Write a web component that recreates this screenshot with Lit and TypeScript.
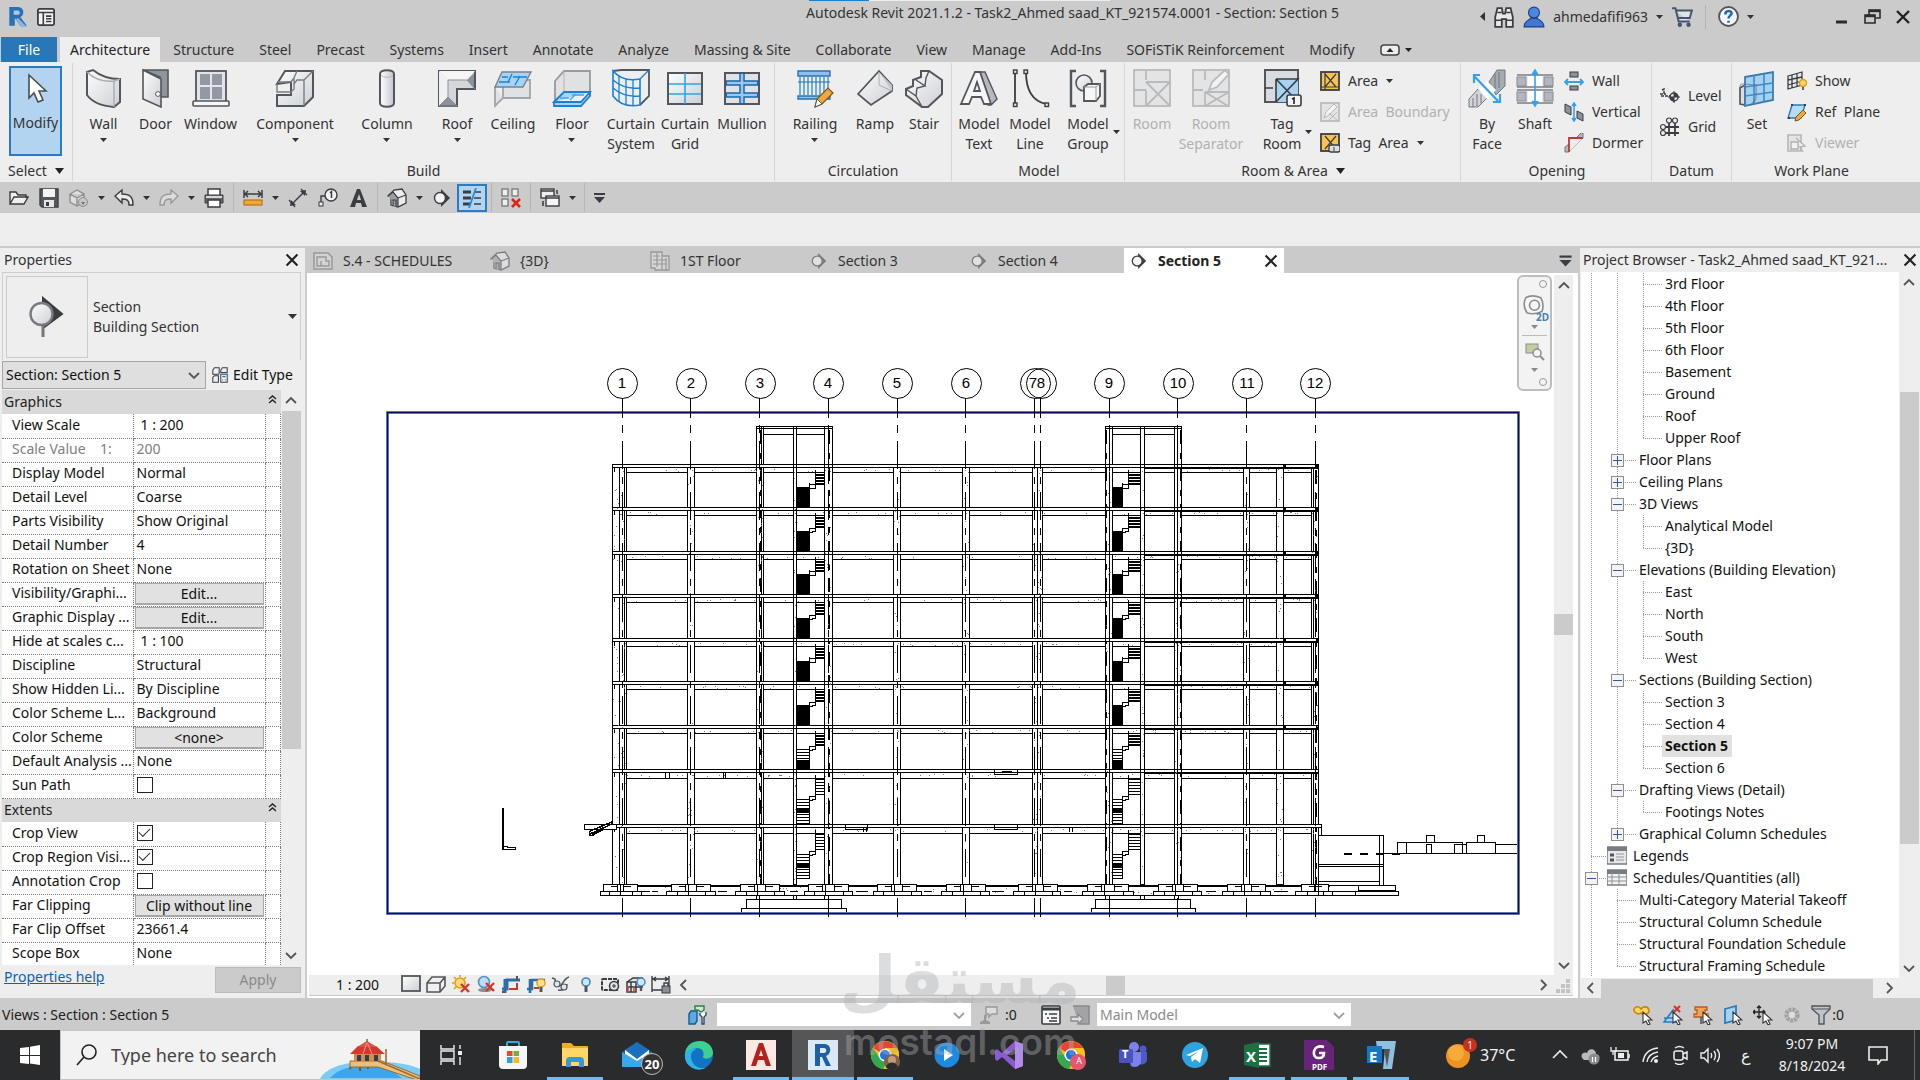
import { LitElement, html, svg, css, nothing } from "lit";
import { customElement } from "lit/decorators.js";
import { classMap } from "lit/directives/class-map.js";

const K = "#53565c";
const D = "#3a3d42";
const B = "#1c7fd6";

/* 40-unit ribbon icons */
const big: Record<string, unknown> = {
  modify: svg`<path d="M13 7v23l5-5 4 9 5-2-4-9h7z" fill="#fff" stroke="#4a4d52" stroke-width="1.6"/>`,
  wall: svg`<path d="M3 4l6-2c6 5 15 9 27 9v23l-6 5C18 38 8 34 3 27z" fill="url(#lite)" stroke="${K}" stroke-width="2"/><path d="M3 4c8 8 17 10 27 9v26M30 13l6-2" fill="none" stroke="#a9adb2" stroke-width="1.4"/>`,
  door: svg`<path d="M7 2h25v27h-8V9z" fill="#8f959d" stroke="${K}" stroke-width="1.6"/><path d="M7 2l18 9v28L7 31z" fill="url(#lite)" stroke="${K}" stroke-width="1.6"/><circle cx="22" cy="26" r="2.4" fill="#fff" stroke="${K}"/>`,
  window: svg`<rect x="5" y="3" width="30" height="31" fill="#e2e4e7" stroke="${K}" stroke-width="1.8"/><rect x="9" y="6" width="22" height="25" fill="#9299a3"/><path d="M20 6v25M9 18h22" stroke="#e4e6ea" stroke-width="2"/><rect x="2" y="33" width="36" height="5" rx="1" fill="#f6f6f6" stroke="${K}" stroke-width="1.6"/>`,
  component: svg`<path d="M2 16L10 3h28v26l-9 9H2V27h14V14z" fill="url(#lite)" stroke="${K}" stroke-width="2"/><path d="M2 16v8h14l3-3V10L22 3M19 10l-3 4H3M29 12v26M29 12l9-9M29 12h-7l-3 4" fill="none" stroke="#7a7d83" stroke-width="1.4"/>`,
  column: svg`<path d="M13 6c0-5 14-5 14 0v29c0 5-14 5-14 0z" fill="url(#side)" stroke="${K}" stroke-width="2"/><path d="M14 7c2 3 10 3 12 0" fill="none" stroke="#b4b7bb"/>`,
  roof: svg`<path d="M2 3h36v18H20v17H2z" fill="#d3d6da" stroke="${K}" stroke-width="2"/><path d="M2 3l9 9h19l8-9z" fill="#f6f6f7"/><path d="M2 3l9 9v17l-9 9z" fill="#f0f1f2"/><path d="M11 12v17l-9 9h18l-9-9M11 12h19l8 9" fill="none" stroke="#8d9198"/><path d="M3 37l8-8 8 8zM37 5v15l-7-8z" fill="#8c929b"/>`,
  ceiling: svg`<path d="M2 19v19l8-8V12h27v18H10" fill="#dfe1e3" stroke="#a2a5a9" stroke-width="1.8"/><path d="M2 19L9 4h29l-8 15z" fill="#a6d4f6" stroke="#78828c" stroke-width="1.4"/><path d="M6 14h11M20 9h14M9 9h6M15 14l4-8M22 17l5-9" stroke="${B}" stroke-width="1.4"/>`,
  floor: svg`<path d="M3 32V13L12 3h26v21" fill="#dfe1e3" stroke="#96999e" stroke-width="1.8"/><path d="M12 3v22" stroke="#b4b7bb"/><path d="M2 34l10-10h26l-9 10zv4h27l9-10v-4" fill="#a6d4f6" stroke="${B}" stroke-width="1.8"/><path d="M8 30h9M20 27h12M18 32l6-6" stroke="#4da2ea" stroke-width="1.4"/>`,
  curtainSystem: svg`<path d="M2 3l8-1h28v26l-9 9" fill="#eceef0" stroke="${K}" stroke-width="1.8"/><path d="M2 3c7 8 17 10 27 8v26C18 39 8 36 2 28z" fill="#e9f1f8" stroke="${B}" stroke-width="1.6"/><path d="M2 12c8 7 17 9 27 8M2 20c8 7 17 9 27 8M8 8v25M15 11v25M22 12v25M29 11l9-9" fill="none" stroke="${B}" stroke-width="1.3"/>`,
  curtainGrid: svg`<rect x="3" y="5" width="34" height="31" fill="url(#lite)" stroke="${K}" stroke-width="2"/><path d="M20 5v31M4 16h32M4 26h32" stroke="#31a2ec" stroke-width="1.6"/>`,
  mullion: svg`<rect x="3" y="5" width="34" height="31" fill="#dfe2e6" stroke="${K}" stroke-width="2"/><path d="M4 15h32M4 27h32M20 5v31" stroke="#1a66ab" stroke-width="5.5"/><path d="M5 15h30M5 27h30M20 6v29" stroke="#9cc6ec" stroke-width="2.6"/>`,
  railing: svg`<path d="M3 3h32v5H3zM3 28h32v3H3z" fill="#8fc1ec" stroke="#2a70ad" stroke-width="1.4"/><path d="M5 8v20M9 8v20M13 8v20M17 8v20M21 8v20M25 8v20M29 8v20M33 8v20" stroke="#4e9bd8" stroke-width="1.6"/><path d="M3 14h32" stroke="#2a70ad" /><path d="M20 39l2-8 11-11 5 5-11 11z" fill="#f2a93b" stroke="#7a5419" stroke-width="1.2"/><path d="M20 39l2-8 5 5z" fill="#fff" stroke="#555"/>`,
  ramp: svg`<path d="M3 26L24 3l13 14v6L16 37z" fill="url(#lite)" stroke="${K}" stroke-width="1.8"/><path d="M37 23L24 17V4" fill="none" stroke="#a9adb2"/><path d="M24 4l13 13v6z" fill="#c2c5ca"/>`,
  stair: svg`<path d="M2 21l7-3V12l8-3V3h8l13 9v14L24 39h-6L2 27z" fill="url(#lite)" stroke="${K}" stroke-width="2"/><path d="M2 21l10 7 1-8 8-2-9-6M21 18l1-8 3-7M12 28l6 11" fill="none" stroke="${K}" stroke-width="1.4"/>`,
  modelText: svg`<path d="M19 4h7l12 27-6 6h-3z" fill="#b5b9bf" stroke="${K}" stroke-width="1.4"/><path d="M2 36L16 4h5l11 32h-7l-3-7H13l-3 7zM15 23h6l-3-9z" fill="#f5f6f7" stroke="${K}" stroke-width="1.8" fill-rule="evenodd"/>`,
  modelLine: svg`<path d="M5 4v32M16 4c0 18 6 29 20 32" fill="none" stroke="${D}" stroke-width="1.8"/><g fill="#eee" stroke="${D}" stroke-width="1.4"><rect x="3.500" y="2" width="3.500" height="3.500"/><rect x="3.500" y="35" width="3.500" height="3.500"/><rect x="14" y="2" width="3.500" height="3.500"/><rect x="35" y="35" width="3.500" height="3.500"/></g>`,
  modelGroup: svg`<path d="M8 3H3v35h5M32 3h5v35h-5" fill="none" stroke="${K}" stroke-width="2.4"/><circle cx="16" cy="15" r="8" fill="url(#lite)" stroke="${K}" stroke-width="1.6"/><path d="M16 19l4-3h12v12l-4 5H16z" fill="#f5f6f7" stroke="${K}" stroke-width="1.8"/><path d="M16 19h12v14M28 19l4-3" fill="none" stroke="#9a9da2"/>`,
  room: svg`<g stroke="#b9babc" fill="#e3e4e5" stroke-width="1.8"><rect x="2" y="2" width="36" height="36"/><path d="M2 22h12M14 2v10M14 22v16M14 14h24M14 14l23 23M38 14L14 38" fill="none"/></g>`,
  roomSeparator: svg`<g stroke="#b9babc" fill="#e3e4e5" stroke-width="1.8"><rect x="2" y="2" width="36" height="36"/><path d="M2 22h10M14 2v10M14 24v14M14 24h24M14 24l23 14M38 24L14 38" fill="none"/><path d="M18 22l3-8L34 2l4 4-12 13z" fill="#f3f3f3"/></g>`,
  tagRoom: svg`<rect x="3" y="2" width="33" height="32" fill="#d8dbdf" stroke="${K}" stroke-width="2"/><rect x="14" y="11" width="22" height="23" fill="#a8d1f2"/><path d="M14 11h22L14 34M14 11l22 23M14 11v23M3 20h8" fill="none" stroke="${D}" stroke-width="1.6"/><rect x="25" y="27" width="14" height="11" rx="2" fill="#f4f4f4" stroke="${D}" stroke-width="1.6"/><path d="M30 31l2-1v6" stroke="#222" fill="none" stroke-width="1.6"/>`,
  byFace: svg`<path d="M22 14L30 2h8v16l-9 9z" fill="#a5abb3" stroke="#73777d"/><path d="M2 31l9-10 9 9-9 9H2z" fill="#d2d5d9" stroke="#73777d"/><path d="M28 6v16M32 4v16M6 30v9M10 26v12M14 26v9" stroke="#73777d"/><path d="M11 21l9-8 9 9-9 9z" fill="#fff"/><path d="M7 8l24 25M7 15V7h6M33 26v8h-7" fill="none" stroke="#31a2ec" stroke-width="2.2"/>`,
  shaft: svg`<g fill="#b3b7bd" stroke="#85898f"><rect x="2" y="9" width="9" height="9"/><rect x="29" y="9" width="9" height="9"/><rect x="2" y="24" width="9" height="9"/><rect x="29" y="24" width="9" height="9"/></g><path d="M2 7h36M2 19h36M2 35h36M2 22h36" stroke="#7b7f85" stroke-width="1.6"/><rect x="13" y="8" width="14" height="10" fill="#fff"/><rect x="13" y="23" width="14" height="11" fill="#fff"/><path d="M20 3v34M17 7l3-5 3 5M17 33l3 5 3-5" fill="#31a2ec" stroke="#31a2ec" stroke-width="1.6"/>`,
  set: svg`<path d="M3 20l5-3v20l-5-1z" fill="#ddd" stroke="${K}" stroke-width="1.6"/><path d="M8 9l28-5v28L8 38z" fill="#a5d1ee" stroke="#3d7ab0" stroke-width="1.8"/><path d="M17 7v29M27 6v28M8 19l28-4M8 28l28-4" stroke="#3d8bcb" stroke-width="1.6"/><path d="M3 34V18q1-3 4-2l12 1v14l-5 6" fill="none" stroke="#567" stroke-width="1.2" opacity=".6"/>`,
};

/* 20-unit icons */
const sm: Record<string, unknown> = {
  appR: svg`<path d="M3 18V1h8c6 0 6 8 2 9l6 8h-6l-5-7v7z" fill="#2b70b3"/><path d="M7 4h4c2 0 2 4 0 4H7z" fill="#a9cbe9"/><path d="M11 11l8 8h-5l-5-7z" fill="#8eb4dd"/>`,
  panel: svg`<rect x="1" y="1" width="18" height="18" rx="2" fill="#f3f3f3" stroke="${D}" stroke-width="2"/><path d="M1 5h18M7 5v14M10 9h6M10 12h6M10 15h6" stroke="${D}" stroke-width="1.8"/>`,
  binoc: svg`<path d="M2 19v-9l2-8h4l1 5h2l1-5h4l2 8v9h-6v-7H8v7z" fill="#e8e8e8" stroke="${D}" stroke-width="1.6"/><path d="M2 13h6M12 13h6M4 6h4M12 6h4" stroke="${D}" stroke-width="1.4"/>`,
  user: svg`<circle cx="10" cy="6" r="5" fill="#4b86e0" stroke="#1d407f"/><path d="M1 19c0-6 5-6 6-8h6c1 2 6 2 6 8z" fill="#3f77d3" stroke="#1d407f"/>`,
  cart: svg`<path d="M1 2h3l3 12h10M5 4h14l-2 7H7" fill="#dfe5ec" stroke="#44566e" stroke-width="1.8"/><circle cx="8" cy="17" r="2" fill="#44566e"/><circle cx="16" cy="17" r="2" fill="#44566e"/>`,
  help: svg`<circle cx="10" cy="10" r="9" fill="#f4f7fb" stroke="${K}" stroke-width="1.8"/><path d="M7 8c0-4 6-4 6-1 0 2-3 2-3 5M10 14v2" fill="none" stroke="#2467b5" stroke-width="2.4"/>`,
  min: svg`<path d="M5 15h11" stroke="#2b2b2b" stroke-width="3"/>`,
  restore: svg`<path d="M7 3h11v8H7z" fill="none" stroke="#2b2b2b" stroke-width="1.6"/><path d="M7 4h11" stroke="#2b2b2b" stroke-width="2.4"/><path d="M3 8h10v8H3z" fill="#cbcbcb" stroke="#2b2b2b" stroke-width="1.6"/><path d="M3 9h10" stroke="#2b2b2b" stroke-width="2.4"/>`,
  close: svg`<path d="M4 4l12 12M16 4L4 16" stroke="#222" stroke-width="2.4"/>`,
  folder: svg`<path d="M1 16V4h6l2 3h8v3M1 16l4-7h14l-4 7z" fill="#efefef" stroke="${D}" stroke-width="1.4"/>`,
  save: svg`<path d="M1 1h18v18H3l-2-2z" fill="#54575d" stroke="${D}" stroke-width="1.4"/><path d="M4 1h12v8H4z" fill="#f3f3f3"/><path d="M5 12h10v7H5z" fill="#e5e5e5"/><path d="M7 14h3v4H7z" fill="${D}"/>`,
  sync: svg`<path d="M1 6l7-4 7 4v8l-7 4-7-4zM1 6l7 4 7-4M8 10v8" fill="#dedede" stroke="#8b8d90" stroke-width="1.4"/><circle cx="14" cy="14" r="4.500" fill="#c4c5c7" stroke="#8b8d90"/><path d="M12 14h4l-2 3z" fill="#777"/>`,
  undo: svg`<path d="M1 8l7-6v4c8 0 11 3 11 11h-4c0-5-2-6-7-6v4z" fill="#eaeaea" stroke="${D}" stroke-width="1.4"/>`,
  redo: svg`<path d="M19 8l-7-6v4C4 6 1 9 1 17h4c0-5 2-6 7-6v4z" fill="#dcdcdc" stroke="#97999c" stroke-width="1.4"/>`,
  print: svg`<rect x="4" y="1" width="12" height="7" fill="#fff" stroke="${D}" stroke-width="1.5"/><path d="M1 7h18v8H1z" fill="#64676c" stroke="${D}"/><rect x="4" y="12" width="12" height="7" fill="#fff" stroke="${D}" stroke-width="1.5"/><path d="M2 9h16" stroke="#d7d7d7" stroke-width="2"/>`,
  measure: svg`<path d="M1 6h18M1 2v8M19 2v8M5 3L2 6l3 3M15 3l3 3-3 3" fill="none" stroke="${D}" stroke-width="1.5"/><rect x="1" y="12" width="18" height="5" fill="#f3a734" stroke="#a8690c"/>`,
  dim: svg`<path d="M4 16L16 4" stroke="${D}" stroke-width="1.5"/><path d="M2 18l1-6 5 5zM18 2l-1 6-5-5z" fill="${D}"/><path d="M1 12l6 7M13 1l6 6" stroke="${D}" stroke-width="1.2"/>`,
  tag: svg`<circle cx="13" cy="7" r="6" fill="#f2f2f2" stroke="${D}" stroke-width="1.4"/><path d="M12 5l1.500-1.500V10" fill="none" stroke="${D}" stroke-width="1.5"/><path d="M7 8H3v9" fill="none" stroke="${D}" stroke-width="1.4"/><rect x="1" y="14" width="4" height="4" fill="#eee" stroke="${D}"/>`,
  textA: svg`<path d="M2 19L9 1h3l7 18h-5l-1-4H8l-1 4zM9 12h4l-2-6z" fill="${D}" fill-rule="evenodd"/>`,
  house: svg`<path d="M1 8l6-6 8-1 4 6v8l-8 4-7-2V9z" fill="#ececec" stroke="${D}" stroke-width="1.3"/><path d="M1 8l5-4 5 6v9M11 10l8-3M6 18v-6h3v7" fill="#9b9ea3" stroke="${D}" stroke-width="1.2"/>`,
  section: svg`<path d="M9 1l9 9-9 9z" fill="${D}"/><circle cx="8" cy="10" r="5.500" fill="#f1f3f5" stroke="${D}" stroke-width="1.4"/>`,
  thin: svg`<path d="M1 4h8M1 10h8M1 16h8" stroke="${D}" stroke-width="3"/><path d="M12 4h7M12 10h7M12 16h7" stroke="${D}" stroke-width="1.5"/><path d="M14 0L7 20" stroke="#1e8ee6" stroke-width="1.8"/>`,
  closeHidden: svg`<g fill="#eee" stroke="#777" stroke-width="1.3"><rect x="1" y="1" width="6" height="7"/><rect x="11" y="1" width="6" height="7"/><rect x="1" y="11" width="6" height="7"/></g><path d="M11 11l8 8M19 11l-8 8" stroke="#d9261c" stroke-width="2.6"/>`,
  switchWin: svg`<rect x="1" y="1" width="13" height="9" fill="#eee" stroke="${D}" stroke-width="1.4"/><rect x="6" y="8" width="13" height="10" fill="#f5f5f5" stroke="${D}" stroke-width="1.4"/><path d="M1 3h13M6 10h13" stroke="${D}" stroke-width="1.6"/><path d="M17 2v4M3 13v5" stroke="${D}" stroke-width="1.6"/>`,
  custom: svg`<path d="M5 6h11" stroke="${D}" stroke-width="2"/><path d="M5 9h11l-5.500 6z" fill="${D}"/>`,
  area: svg`<rect x="1" y="1" width="18" height="18" fill="#f6c251" stroke="${D}" stroke-width="1.8"/><path d="M5 3l11 13M16 3L5 16M5 1v18M1 16h18" fill="none" stroke="${D}" stroke-width="1.2"/>`,
  areaOff: svg`<rect x="1" y="1" width="18" height="18" fill="#e4e4e4" stroke="#b5b6b8" stroke-width="1.6"/><path d="M4 16l2-6 8-8 3 3-8 8z" fill="#f5f5f5" stroke="#b5b6b8"/><path d="M9 18l8-8M9 11l9 8" stroke="#b5b6b8"/>`,
  areaTag: svg`<rect x="1" y="1" width="18" height="17" fill="#f6c251" stroke="${D}" stroke-width="1.8"/><path d="M5 3l11 13M16 3L5 16" stroke="${D}" stroke-width="1.2"/><rect x="9" y="12" width="11" height="7" rx="2" fill="#dde0e3" stroke="${D}" stroke-width="1.3"/><path d="M14 14v4" stroke="${D}"/>`,
  opWall: svg`<g fill="#8d9299" stroke="${D}"><rect x="6" y="1" width="8" height="5"/><rect x="6" y="15" width="8" height="4"/></g><path d="M1 11h18M4 8l-3 3 3 3M16 8l3 3-3 3" fill="none" stroke="#31a2ec" stroke-width="1.8"/>`,
  opVert: svg`<g fill="#8d9299" stroke="${D}"><path d="M1 2l6 3v8l-6-3zM13 9l6 3v7l-6-3z"/></g><path d="M10 1v18M8 4l2-3 2 3M8 16l2 3 2-3" fill="none" stroke="#31a2ec" stroke-width="1.6"/>`,
  opDorm: svg`<path d="M1 14l4-3v8H1zM13 4l4-4h2v5z" fill="#b3b7bd" stroke="#777"/><path d="M5 19V5h14" fill="none" stroke="#c8372d" stroke-width="1.8"/><path d="M6 18L18 6" stroke="#bbb"/>`,
  level: svg`<path d="M1 10h10M2 4l2-1v5M0 8h6" stroke="${D}" stroke-dasharray="3 1" fill="none" stroke-width="1.5"/><circle cx="14" cy="11" r="4" fill="#eee" stroke="${D}" stroke-width="1.5"/><path d="M14 5v12M8 11h12" stroke="${D}"/><path d="M14 11V7a4 4 0 014 4zM14 11v4a4 4 0 01-4-4z" fill="${D}"/>`,
  grid: svg`<path d="M9 6v13M15 6v13M5 10h14M5 16h14" stroke="${D}" stroke-width="1.8"/><g fill="#eee" stroke="${D}" stroke-width="1.2"><circle cx="9" cy="3.500" r="2.500"/><circle cx="15" cy="3.500" r="2.500"/><circle cx="3" cy="10" r="2.500"/><circle cx="3" cy="16" r="2.500"/></g>`,
  show: svg`<path d="M1 5l14-4v13L1 18zM5 4v13M10 3v13M1 9l14-3M1 14l14-4" fill="#e8eaec" stroke="${D}" stroke-width="1.3"/><circle cx="16" cy="12" r="3.500" fill="#ffd566" stroke="#e59b1a" stroke-width="1.4"/><path d="M15 16h2v3h-2z" fill="#666"/>`,
  refPlane: svg`<path d="M5 3h13l-4 13H1z" fill="#b5dbf5" stroke="#2a7cbd" stroke-width="1.4"/><path d="M4 2h2v2H4zM17 2h2v2h-2zM1 15h2v2H1z" fill="${D}"/><path d="M8 19l1-4 7-7 3 3-7 7z" fill="#f2a93b" stroke="#7a5419"/>`,
  viewer: svg`<path d="M1 2h13v16H1z" fill="#e4e4e4" stroke="#b5b6b8" stroke-width="1.6"/><path d="M4 9h7v7H4zM9 5l9 8-5 1 3 5" fill="#f1f1f1" stroke="#b0b1b3" stroke-width="1.4"/>`,
  editType: svg`<g fill="#eef1f4" stroke="${D}" stroke-width="1.3"><path d="M1 4l2-3h6v7l-1 1H1zM11 4l2-3h6v6H11zM1 13l2-2h5v8H1z"/></g><rect x="11" y="9" width="8" height="10" fill="#fff" stroke="${D}" stroke-width="1.3"/><path d="M13 12h4" stroke="${B}" stroke-width="2"/><path d="M13 16h1M16 16h1" stroke="${D}" stroke-width="1.6"/>`,
  sheet: svg`<path d="M1 2h14l4 4v12H1z" fill="#dcdcdc" stroke="#6e7073" stroke-width="1.5"/><path d="M4 6h9v4h3v5H4zM8 10v5" fill="none" stroke="#6e7073" stroke-width="1.4"/>`,
  plan: svg`<path d="M3 1h9v4h7v14H5v-2H1V1z" fill="#dedede" stroke="#6e7073" stroke-width="1.3"/><path d="M3 5h7M3 9h14M3 13h14M7 2v14M12 6v12M16 7v12" stroke="#6e7073" stroke-width="1.2"/>`,
  wheel: svg`<path d="M3 3q5-3 12 0 3 5 1 11-7 3-12 1Q0 9 3 3z" fill="#f6f6f6" stroke="#8b8d90" stroke-width="1.3"/><circle cx="10" cy="9" r="4" fill="none" stroke="#8b8d90" stroke-width="1.3"/>`,
  zoomR: svg`<rect x="1" y="2" width="12" height="9" fill="#c1cf9e" stroke="#8b8d90"/><circle cx="12" cy="11" r="4" fill="#f3f3f3" stroke="#8b8d90" stroke-width="1.5"/><path d="M15 14l4 4" stroke="#8b8d90" stroke-width="2"/>`,
  vSquare: svg`<rect x="1" y="1" width="18" height="15" fill="url(#lite)" stroke="${K}" stroke-width="1.8"/>`,
  vBox: svg`<path d="M1 8l5-6h13v9l-5 6H1zM1 8h13v9M14 8l5-6" fill="#f0f0f0" stroke="${K}" stroke-width="1.6"/>`,
  vSun: svg`<circle cx="9" cy="8" r="5" fill="#ffdc72" stroke="#e59b1a" stroke-width="1.6"/><path d="M9 0v2M1 8h2M3 2l2 2M15 2l-2 2M3 14l2-2" stroke="#e59b1a" stroke-width="1.6"/><path d="M10 9l8 8M18 9l-8 8" stroke="#d0382d" stroke-width="2.4"/>`,
  vShadow: svg`<circle cx="8" cy="7" r="5.500" fill="#bcdcf5" stroke="#5d8fb8" stroke-width="1.6"/><ellipse cx="9" cy="15" rx="7" ry="2" fill="#8a8d92"/><path d="M10 8l8 8M18 8l-8 8" stroke="#d0382d" stroke-width="2.4"/>`,
  vCrop: svg`<path d="M1 14h5V5h13M4 18V4" fill="none" stroke="#2b6cab" stroke-width="3"/><path d="M8 14h8V8" fill="none" stroke="#d0382d" stroke-width="2"/><path d="M1 17h3M16 1v4" stroke="${K}" stroke-width="2"/>`,
  vCropBulb: svg`<path d="M1 14h5V5h13M4 18V4" fill="none" stroke="#2b6cab" stroke-width="2.600"/><path d="M8 13h5" stroke="#d0382d" stroke-width="2"/><circle cx="15" cy="8" r="4" fill="#ffe08a" stroke="#e59b1a" stroke-width="1.4"/><path d="M15 12v5" stroke="${K}" stroke-width="3"/>`,
  vGlasses: svg`<path d="M1 3l3 1c0 6 4 8 6 6s4-7 8-8M7 15c6 1 9-2 9-6" fill="none" stroke="${K}" stroke-width="1.5"/><circle cx="6" cy="9" r="3" fill="#dbe9f5" stroke="${K}" stroke-width="1.2"/><circle cx="13" cy="12" r="3" fill="#dbe9f5" stroke="${K}" stroke-width="1.2"/>`,
  vBulb: svg`<circle cx="10" cy="7" r="4" fill="#cfe6fa" stroke="#3c86c6" stroke-width="1.6"/><path d="M10 11v6" stroke="${K}" stroke-width="3"/>`,
  vTemp: svg`<rect x="1" y="4" width="16" height="11" rx="1" fill="#eee" stroke="${D}" stroke-width="2" stroke-dasharray="4 1"/><circle cx="13" cy="11" r="4.500" fill="#dfe1e3" stroke="${D}" stroke-width="1.5"/><path d="M11 11h4M13 9v4" stroke="${D}"/>`,
  vModel: svg`<path d="M1 7l6-4h9v10M1 7v10h9V7zM5 7v10M1 12h14" fill="#e1e4e8" stroke="${D}" stroke-width="1.5"/><path d="M2 17v-6M8 17v-6" stroke="#c44" stroke-width="1.5"/><circle cx="15" cy="7" r="4" fill="#cfe6fa" stroke="#3c86c6" stroke-width="1.4"/><path d="M15 11v5" stroke="${K}" stroke-width="2.4"/>`,
  vLock: svg`<path d="M1 1v16M18 1v10M1 4h17M5 2L2 4l3 2M14 2l3 2-3 2M1 15h10" fill="none" stroke="${D}" stroke-width="1.4"/><rect x="11" y="11" width="8" height="7" fill="#8a8d92" stroke="${D}"/><path d="M13 11V8h4v3" fill="none" stroke="${D}" stroke-width="1.4"/>`,
  sWork: svg`<path d="M1 9l2-3h6v10l-2 3H1z" fill="#5aa9e3" stroke="#155a94" stroke-width="1.4"/><path d="M7 5V1h9v4l-3 2-3-2z" fill="#cfe8cf" stroke="#2e7d4f" stroke-width="1.4"/><path d="M12 8v2l2 2v7h2v-7l2-2V7" fill="#fff" stroke="#2f4b68" stroke-width="1.4"/>`,
  sReq: svg`<path d="M7 2h11v7h-5l-3 3V9H7z" fill="#ddd" stroke="#999" stroke-width="1.4"/><path d="M5 10h3l-1 5 4 2v2H1v-2l4-2z" fill="#999"/>`,
  sOpt: svg`<rect x="1" y="1" width="18" height="18" rx="1" fill="#f6f6f6" stroke="${D}" stroke-width="1.6"/><path d="M1 4h18" stroke="${D}" stroke-width="3"/><path d="M4 9h2M8 9h8M6 13h2M10 13h6M8 16h8" stroke="${D}" stroke-width="1.6"/>`,
  sAdd: svg`<path d="M3 1h16v18H9" fill="#a2a3a5" stroke="#8a8b8d" stroke-width="1.6"/><path d="M1 12h7V9l5 5-5 5v-3H1z" fill="#ddd" stroke="#8a8b8d" stroke-width="1.3"/>`,
  pLink: svg`<path d="M1 4c2-4 6-2 7 0 2-3 7-3 8 1s-6 6-8 3C6 10 0 8 1 4z" fill="#ffd566" stroke="#c9860e" stroke-width="1.6"/>`,
  pUnder: svg`<path d="M1 17h12L10 5z M1 13h12" fill="#a5d1f2" stroke="#2a7cbd" stroke-width="1.6"/><path d="M11 1l6 6M17 1l-6 6" stroke="#d0382d" stroke-width="2.2"/>`,
  pPin: svg`<path d="M2 2h12v3h-2v4h3v3H1V9h3V5H2z" fill="#f7a25a" stroke="#c2591a" stroke-width="1.3"/><path d="M8 12v7" stroke="${K}" stroke-width="1.6"/>`,
  pFace: svg`<path d="M2 4l11-3v14L2 18z" fill="#a5d1f2" stroke="#2a7cbd" stroke-width="1.8"/>`,
  pDrag: svg`<path d="M6 1v12M0 7h12M4 3l2-2 2 2M4 11l2 2 2-2M2 5L0 7l2 2M10 5l2 2-2 2" fill="none" stroke="#222" stroke-width="1.3"/>`,
  gear: svg`<circle cx="10" cy="10" r="6" fill="none" stroke="#a2a2a2" stroke-width="5" stroke-dasharray="3 1"/><circle cx="10" cy="10" r="3.500" fill="#ddd"/>`,
  funnel: svg`<path d="M1 1h18v3l-6 6v9H8v-9L1 4z" fill="#bfc4c9" stroke="${K}" stroke-width="1.4"/><path d="M1 4h18" stroke="${K}"/>`,
  legend: svg`<rect x="0" y="1" width="20" height="17" fill="#e5e7e9" stroke="#70757b" stroke-width="1.4"/><path d="M0 3h20" stroke="#777c83" stroke-width="4"/><path d="M3 9h4M3 14h4" stroke="#555" stroke-width="3"/><path d="M9 8h8M9 11h8M9 14h8" stroke="#999"/>`,
  sched: svg`<rect x="0" y="2" width="20" height="15" fill="#f1f2f3" stroke="#70757b" stroke-width="1.4"/><path d="M0 4h20" stroke="#777c83" stroke-width="4"/><path d="M0 9h20M0 13h20M5 4v13M12 4v13" stroke="#8c9096"/>`,
};
const cursorOverlay = svg`<path d="M10 7v11l3-2 2 4 2-1-2-4h4z" fill="#fff" stroke="#333" stroke-width="1.1"/>`;

const chromeArt = svg`<circle cx="15" cy="15" r="14" fill="#fbc116"/><path d="M15 15L3 8A14 14 0 0127 8z" fill="#ea4335"/><path d="M3 8a14 14 0 0010 21l5-9-9-3z" fill="#34a853"/><path d="M27 8H15l6 10-5 11A14 14 0 0027 8z" fill="#fbc116"/><circle cx="15" cy="15" r="6.500" fill="#fff"/><circle cx="15" cy="15" r="5" fill="#1a73e8"/>`;
/* 30-unit task bar icons */
const task: Record<string, unknown> = {
  view: svg`<g fill="none" stroke="#eee" stroke-width="1.4"><path d="M5 5v4h13V5M5 25v-4h13v4M5 11h13v8H5zM24 5v4M24 17v8"/></g><rect x="22" y="11" width="4" height="4" fill="#eee"/>`,
  store: svg`<path d="M9 8V3q0-1 1-1h10q1 0 1 1v5" fill="none" stroke="#35a9e0" stroke-width="2"/><path d="M1 6h28v19q0 4-4 4H5q-4 0-4-4z" fill="#f4f6f7"/><path d="M9 11h5.500v5H9z" fill="#e8472b"/><path d="M15.500 11H21v5h-5.500z" fill="#6cb33e"/><path d="M9 17h5.500v6H9z" fill="#2f9fe0"/><path d="M15.500 17H21v6h-5.500z" fill="#fab81e"/>`,
  files: svg`<path d="M2 3h9l3 3h14v20H2z" fill="#f0ab26"/><path d="M2 8h26v18H2z" fill="#ffd667"/><path d="M6 27v-6q0-4 4-4h10q4 0 4 4v6h-5v-5h-8v5z" fill="#3f93d8"/>`,
  mail: svg`<path d="M0 12L15 2l15 10v15H0z" fill="#0f5ea8"/><path d="M3 10h24v12H3z" fill="#fff"/><path d="M3 10L15 2l12 8-12 9z" fill="#1b6fbd"/><path d="M0 12l15 9 15-9v15H0z" fill="#3aa7ea"/>`,
  edge: svg`<circle cx="15" cy="15" r="14" fill="#1272c4"/><path d="M1 14C2 4 10 1 16 1c8 0 13 6 13 12s-9 7-10 4c2-5-1-9-6-9S3 11 1 14z" fill="#3ccf8e"/><path d="M1 14c2-4 8-7 12-5-6 1-8 8-4 14 3 5 9 6 14 4A14 14 0 011 14z" fill="#2db3e8"/>`,
  acad: svg`<rect x="0" y="0" width="30" height="30" fill="#fbe9e4"/><path d="M5 26L13 3h4l8 23h-5l-2-6h-6l-2 6zM13 16h4l-2-6z" fill="#b3221c" fill-rule="evenodd"/>`,
  revit: svg`<rect x="0" y="0" width="30" height="30" fill="#dbe8f5"/><path d="M7 26V4h9c8 0 8 10 2 12l5 10h-5l-4-9h-2v9zM12 8v5h4c3 0 3-5 0-5z" fill="#1f5fa3" fill-rule="evenodd"/>`,
  chrome: svg`${chromeArt}<circle cx="22" cy="22" r="8" fill="#7d5f4b"/><circle cx="22" cy="20" r="4" fill="#c39a7c"/><path d="M16 27c2-6 10-6 12 0-3 4-9 4-12 0z" fill="#2c2a2a"/>`,
  media: svg`<circle cx="15" cy="15" r="12.500" fill="#1d8ae0"/><path d="M12 9l9 6-9 6z" fill="#fff"/>`,
  vs: svg`<path d="M21 1l8 3v22l-8 3L8 17l-5 4-2-2V11l2-2 5 4zM21 9l-8 6 8 6z" fill="#8b5cd0" fill-rule="evenodd"/><path d="M21 1l8 3v22l-8 3z" fill="#b48bea"/>`,
  chrome2: svg`${chromeArt}<circle cx="22" cy="22" r="8" fill="#e5576a"/>`,
  teams: svg`<circle cx="16" cy="7" r="5" fill="#7b83eb"/><circle cx="25" cy="9" r="3.500" fill="#5059c9"/><path d="M20 12h9v9q-3 5-8 3z" fill="#5059c9"/><path d="M9 12h14v11q-4 6-10 3z" fill="#7b83eb"/><rect x="1" y="9" width="14" height="14" rx="1.500" fill="#4b53bc"/>`,
  telegram: svg`<circle cx="15" cy="15" r="13" fill="#2fa3df"/><path d="M6 15l17-7-3 15-5-4-3 3-1-5 8-6-9 5z" fill="#fff"/>`,
  excel: svg`<rect x="13" y="4" width="15" height="22" fill="#fff" stroke="#1d7044" stroke-width="1.500"/><path d="M16 9h9M16 13h9M16 17h9M16 21h9" stroke="#1d7044" stroke-width="2"/><path d="M2 5l15-3v26L2 25z" fill="#1d7044"/>`,
  gpdf: svg`<rect x="0" y="0" width="30" height="30" fill="#69237a"/><path d="M23 0h7v7z" fill="#2a2a2c"/><path d="M20 7C8 3 7 19 15 18c4 0 5-2 5-5h-5" fill="none" stroke="#fff" stroke-width="2.600"/>`,
  eapp: svg`<path d="M10 1h20l-4 28h-9l2-20h-8z" fill="#8fc0dc"/><path d="M18 9h6l-3 18" fill="#4b5560"/><rect x="1" y="6" width="15" height="17" fill="#1177c8"/>`,
};
const tray: Record<string, unknown> = {
  up: svg`<path d="M3 13l7-7 7 7" fill="none" stroke="#eee" stroke-width="1.6"/>`,
  cloud: svg`<path d="M3 14c-4-4 1-8 4-6 2-6 9-4 9 1 5 1 4 6 0 6H4z" fill="#b9babc"/><circle cx="14" cy="14" r="5.500" fill="#8a8b8d"/><path d="M12.500 12v5M15.500 12v5" stroke="#fff" stroke-width="1.2"/>`,
  battery: svg`<rect x="5" y="6" width="13" height="9" fill="none" stroke="#eee" stroke-width="1.600"/><path d="M19 9v4" stroke="#eee" stroke-width="1.600"/><rect x="8" y="8" width="6" height="5" fill="#eee"/><path d="M1 2v4h5V2M3 6v4" fill="none" stroke="#eee" stroke-width="1.300"/>`,
  wifi: svg`<g fill="none" stroke="#eee" stroke-width="1.400"><path d="M3 17C4 9 9 4 18 3M7 17c1-6 4-9 11-10M11 17c1-3 3-5 7-6"/></g><circle cx="16" cy="16" r="2" fill="#eee"/>`,
  cam: svg`<g fill="none" stroke="#eee" stroke-width="1.500"><rect x="4" y="6" width="9" height="9" rx="2"/><path d="M13 9l4-2v7l-4-2M5 3c3-2 6-2 9 0M5 18c3 2 6 2 9 0"/></g>`,
  vol: svg`<g fill="none" stroke="#eee" stroke-width="1.400"><path d="M1 8v5h3l4 4V4L4 8zM11 8c1 2 1 3 0 5M14 6c2 3 2 6 0 9M17 4c3 4 3 9 0 13"/></g>`,
  note: svg`<path d="M1 2h18v13h-6l-3 4v-4H1z" fill="none" stroke="#eee" stroke-width="1.600"/>`,
};

type Tool = { i: string; l: string[]; caret?: "below" | "side"; off?: boolean };
type Mini = { i: string; l: string; caret?: boolean; off?: boolean };
type Panel = { id: string; title: string; caret?: boolean; tools?: Tool[]; stack?: Mini[] };
const T = (i: string, l: string, caret?: "below" | "side", off = false): Tool => ({ i, l: l.split("|"), caret, off });

const PANELS: Panel[] = [
  { id: "build", title: "Build", tools: [
    T("wall", "Wall", "below"), T("door", "Door"), T("window", "Window"), T("component", "Component", "below"),
    T("column", "Column", "below"), T("roof", "Roof", "below"), T("ceiling", "Ceiling"), T("floor", "Floor", "below"),
    T("curtainSystem", "Curtain|System"), T("curtainGrid", "Curtain|Grid"), T("mullion", "Mullion")] },
  { id: "circ", title: "Circulation", tools: [T("railing", "Railing", "below"), T("ramp", "Ramp"), T("stair", "Stair")] },
  { id: "model", title: "Model", tools: [T("modelText", "Model|Text"), T("modelLine", "Model|Line"), T("modelGroup", "Model|Group", "side")] },
  { id: "room", title: "Room & Area", caret: true, tools: [
    T("room", "Room", undefined, true), T("roomSeparator", "Room|Separator", undefined, true), T("tagRoom", "Tag|Room", "side")],
    stack: [{ i: "area", l: "Area", caret: true }, { i: "areaOff", l: "Area  Boundary", off: true }, { i: "areaTag", l: "Tag  Area", caret: true }] },
  { id: "open", title: "Opening", tools: [T("byFace", "By|Face"), T("shaft", "Shaft")],
    stack: [{ i: "opWall", l: "Wall" }, { i: "opVert", l: "Vertical" }, { i: "opDorm", l: "Dormer" }] },
  { id: "datum", title: "Datum", stack: [{ i: "level", l: "Level" }, { i: "grid", l: "Grid" }] },
  { id: "plane", title: "Work Plane", tools: [T("set", "Set")],
    stack: [{ i: "show", l: "Show" }, { i: "refPlane", l: "Ref  Plane" }, { i: "viewer", l: "Viewer", off: true }] },
];

const TABS = ["Architecture", "Structure", "Steel", "Precast", "Systems", "Insert", "Annotate", "Analyze", "Massing & Site",
  "Collaborate", "View", "Manage", "Add-Ins", "SOFiSTiK Reinforcement", "Modify"];

/* "^" opens a menu caret, "|" is a separator */
const QAT = ["folder", "save", "sync", "^", "undo", "^", "redo", "^", "print", "|", "measure", "^", "dim", "tag", "textA", "|",
  "house", "^", "section", "thin", "|", "closeHidden", "|", "switchWin", "^", "|", "custom"];

type Prop = { n: string; v?: string; kind?: "btn" | "check" | "on" | "dim" | "head" | "pad" };
const PROPS: Prop[] = [
  { n: "Graphics", kind: "head" },
  { n: "View Scale", v: "1 : 200", kind: "pad" }, { n: "Scale Value    1:", v: "200", kind: "dim" }, { n: "Display Model", v: "Normal" },
  { n: "Detail Level", v: "Coarse" }, { n: "Parts Visibility", v: "Show Original" }, { n: "Detail Number", v: "4" },
  { n: "Rotation on Sheet", v: "None" }, { n: "Visibility/Graphi...", v: "Edit...", kind: "btn" },
  { n: "Graphic Display ...", v: "Edit...", kind: "btn" }, { n: "Hide at scales c...", v: "1 : 100", kind: "pad" },
  { n: "Discipline", v: "Structural" }, { n: "Show Hidden Li...", v: "By Discipline" }, { n: "Color Scheme L...", v: "Background" },
  { n: "Color Scheme", v: "<none>", kind: "btn" }, { n: "Default Analysis ...", v: "None" }, { n: "Sun Path", kind: "check" },
  { n: "Extents", kind: "head" },
  { n: "Crop View", kind: "on" }, { n: "Crop Region Visi...", kind: "on" }, { n: "Annotation Crop", kind: "check" },
  { n: "Far Clipping", v: "Clip without line", kind: "btn" }, { n: "Far Clip Offset", v: "23661.4" }, { n: "Scope Box", v: "None" },
];

type Node = { t: string; g: string; box?: "+" | "-"; icon?: string; sel?: boolean };
/* guides: v = line through, t = tee, e = last tee */
const TREE: Node[] = [
  ...["3rd Floor", "4th Floor", "5th Floor", "6th Floor", "Basement", "Ground", "Roof"].map((t) => ({ t, g: "vvt" })),
  { t: "Upper Roof", g: "vve" },
  { t: "Floor Plans", g: "vt", box: "+" }, { t: "Ceiling Plans", g: "vt", box: "+" }, { t: "3D Views", g: "vt", box: "-" },
  { t: "Analytical Model", g: "vvt" }, { t: "{3D}", g: "vve" },
  { t: "Elevations (Building Elevation)", g: "vt", box: "-" },
  { t: "East", g: "vvt" }, { t: "North", g: "vvt" }, { t: "South", g: "vvt" }, { t: "West", g: "vve" },
  { t: "Sections (Building Section)", g: "vt", box: "-" },
  { t: "Section 3", g: "vvt" }, { t: "Section 4", g: "vvt" }, { t: "Section 5", g: "vvt", sel: true }, { t: "Section 6", g: "vve" },
  { t: "Drafting Views (Detail)", g: "vt", box: "-" }, { t: "Footings Notes", g: "vve" },
  { t: "Graphical Column Schedules", g: "ve", box: "+" },
  { t: "Legends", g: "t", icon: "legend" }, { t: "Schedules/Quantities (all)", g: "t", box: "-", icon: "sched" },
  { t: "Multi-Category Material Takeoff", g: "vt" }, { t: "Structural Column Schedule", g: "vt" },
  { t: "Structural Foundation Schedule", g: "vt" }, { t: "Structural Framing Schedule", g: "ve" },
];

const APPS: { i: string; n: string; run?: boolean; active?: boolean }[] = [
  { i: "store", n: "Store" }, { i: "files", n: "File Explorer", run: true }, { i: "mail", n: "Mail" }, { i: "edge", n: "Edge" },
  { i: "acad", n: "AutoCAD", run: true }, { i: "revit", n: "Revit", run: true, active: true }, { i: "chrome", n: "Chrome", run: true },
  { i: "media", n: "Media player" }, { i: "vs", n: "Visual Studio" }, { i: "chrome2", n: "Chrome profile" }, { i: "teams", n: "Teams" },
  { i: "telegram", n: "Telegram" }, { i: "excel", n: "Excel", run: true }, { i: "gpdf", n: "PDF", run: true }, { i: "eapp", n: "Editor", run: true },
];

const rnd = (seed: number) => () => ((seed = (seed * 16807) % 2147483647) / 2147483647);

@customElement("app-root")
export class AppRoot extends LitElement {
  static styles = css`
    :host { display: block; font-family: "Noto Sans", "Open Sans", sans-serif; font-size: 14px; line-height: 20px; color: #333; }
    * { box-sizing: border-box; }
    button, select, input { font: inherit; color: inherit; margin: 0; padding: 0; border: 0; background: none; border-radius: 0; }
    button { display: inline-flex; align-items: center; justify-content: center; white-space: nowrap; }
    svg { display: block; flex: none; }
    a { color: #0a62b8; }
    .win { position: relative; display: flex; flex-direction: column; height: 100vh; overflow: hidden; background: #eee; }
    .defs { position: absolute; width: 0; height: 0; }
    .spacer { flex: 1; }

    .title { display: flex; align-items: center; height: 37px; background: #cbcbcb; padding: 0 7px 4px 6px; gap: 9px; }
    .title .name { flex: 1; text-align: center; padding: 0 0 8px 610px; white-space: nowrap; }
    .account { display: flex; align-items: center; gap: 8px; }
    .account .sep { width: 1px; height: 24px; background: #b5b5b5; margin: 0 4px; }
    .winbtns { display: flex; gap: 11px; margin-left: 68px; }
    .progress { position: absolute; top: 0; left: 809px; width: 301px; height: 1px; background: linear-gradient(90deg, #1c7fd6 60px, #eee 60px); }

    .tabs { display: flex; align-items: stretch; gap: 1px; height: 25px; background: #cbcbcb; padding-left: 1px; }
    .tabs button { padding: 0 12px; }
    .tabs .file { width: 56px; background: #2878b8; color: #fff; margin-right: 2px; }
    .tabs .on { background: #eee; color: #222; padding: 0 10px; }

    .ribbon { display: flex; height: 120px; background: #eee; }
    .panel { display: flex; flex-direction: column; border-right: 1px solid #d6d6d6; margin: 1px 0; padding-top: 2px; }
    .panel:last-child { border-right: 0; }
    .body { display: flex; height: 97px; }
    .ptitle { display: flex; justify-content: center; align-items: center; gap: 8px; height: 20px; }
    .tools { display: grid; }
    .tool { display: flex; flex-direction: column; justify-content: flex-start; padding-top: 3px; gap: 6px; position: relative; }
    .tool .txt { display: flex; flex-direction: column; align-items: center; position: relative; }
    .tool .caret-below { margin-top: 4px; }
    .tool .caret-side { position: absolute; left: 100%; top: 16px; margin-left: 4px; }
    .off { color: #b0b1b3; }
    .select { width: 73px; }
    .select .modify { width: 53px; height: 90px; margin: 1px 0 0 9px; background: #b3d4f1; border: 2px solid #2a7ac4; padding-top: 0; gap: 5px; }
    .build .tools { grid-template-columns: 51px 53px 57px 112px 72px 68px 44px 74px 44px 64px 50px; }
    .build { width: 702px; padding-left: 5px; padding-right: 5px; }
    .circ .tools { grid-template-columns: 70px 50px 48px; }
    .circ { width: 177px; padding-left: 5px; padding-right: 5px; }
    .model .tools { grid-template-columns: 50px 52px 64px; }
    .model { width: 173px; padding-left: 2px; }
    .room .tools { grid-template-columns: 52px 66px 76px; }
    .room { width: 336px; padding-left: 1px; }
    .open .tools { grid-template-columns: 48px 48px; margin-right: 5px; }
    .open { width: 191px; padding-left: 2px; }
    .datum { width: 80px; padding-left: 8px; }
    .plane .tools { grid-template-columns: 44px; margin-right: 8px; }
    .plane { width: 156px; padding-left: 3px; }
    .stack { display: flex; flex-direction: column; }
    .mini { height: 31px; justify-content: flex-start; gap: 8px; white-space: pre; }
    .datum .stack { padding-top: 15px; }
    .datum .ptitle { padding-right: 8px; }

    .qat { display: flex; align-items: center; height: 31px; background: #cbcbcb; padding-left: 4px; }
    .qat button { width: 30px; height: 28px; }
    .qat .menu { width: 15px; }
    .qat button:last-child { width: 20px; }
    .qat .sep { width: 1px; height: 29px; margin: 0 4px; background: #b7b7b7; }
    .qat .active { background: #b3d4f1; border: 2px solid #2a7ac4; }
    .options { height: 33px; }

    .main { flex: 1; min-height: 0; display: grid; grid-template-columns: 307px minmax(0, 1fr) 342px; border-top: 2px solid #cbcbcb; }
    .props { display: flex; flex-direction: column; border-right: 2px solid #cbcbcb; padding: 0 4px 0 2px; min-height: 0; }
    .phead { display: flex; align-items: center; justify-content: space-between; height: 24px; padding-left: 2px; }
    .type { display: flex; align-items: center; gap: 5px; height: 88px; border: 1px solid #cfcfcf; border-bottom: 0; padding: 3px; }
    .type .tile { display: grid; place-items: center; width: 82px; height: 82px; border: 1px solid #cbcbcb; }
    .type .desc { flex: 1; }
    .filter { display: flex; align-items: center; height: 30px; gap: 6px; }
    .combo { display: grid; align-items: center; }
    .combo > * { grid-area: 1 / 1; }
    .combo select { appearance: none; width: 100%; height: 100%; padding: 0 3px; }
    .combo svg { justify-self: end; margin-right: 4px; pointer-events: none; }
    .combo span { justify-self: end; }
    .filter .combo { width: 204px; height: 28px; }
    .filter select { background: #dfdfdf; border: 1px solid #a5a5a5; color: #111; }
    .edit { gap: 5px; color: #111; }
    .sheet { flex: 1; display: flex; min-height: 0; overflow: hidden; }
    .sheet .clip { flex: 1; overflow: hidden; background: #fff; }
    table { width: 100%; border-collapse: collapse; table-layout: fixed; color: #111; }
    .c1 { width: 131px; } .c2 { width: 132px; }
    td, th { height: 24px; padding: 0; text-align: left; font-weight: 400; white-space: pre; overflow: hidden; border-bottom: 1px dotted #777; border-right: 1px dotted #777; }
    th.lab { padding: 0 0 2px 10px; }
    td.val { padding: 0 0 2px 3px; }
    td.pad { padding-left: 7px; }
    th.head { background: #d9d9d9; border: 0; color: #222; padding-left: 2px; }
    .headrow { display: flex; justify-content: space-between; align-items: flex-start; padding-right: 4px; }
    .headrow svg { margin-top: 3px; }
    .dim { color: #808080; }
    td .cell { display: flex; width: 100%; height: 22px; background: #e1e1e1; border: 1px solid #a8a8a8; border-bottom-width: 2px; }
    td.btncell { padding: 0 1px; }
    .check { appearance: none; display: grid; place-items: center; width: 16px; height: 16px; border: 1px solid #222; background: #fff; }
    .check:checked::after { content: ""; width: 10px; height: 5px; border: solid #333; border-width: 0 0 1px 1px; transform: translateY(-2px) rotate(-45deg); }
    .vbar { display: flex; flex-direction: column; align-items: center; width: 20px; background: #eee; }
    .vbar .arrow { display: grid; place-items: center; height: 21px; }
    .vbar .thumb { width: 19px; background: #cbcbcb; }
    .vbar .p { flex: 338; } .vbar .q { flex: 195; }
    .pfoot { display: flex; justify-content: space-between; height: 33px; padding: 2px 0 0 2px; }
    .pfoot button { width: 86px; height: 26px; background: #cbcbcb; border: 1px solid #bbb; color: #8a8a8a; }

    .center { display: flex; flex-direction: column; background: #fff; min-width: 0; }
    .docs { display: flex; height: 25px; background: #cacaca; }
    .doc { width: 160px; justify-content: flex-start; gap: 10px; padding-left: 6px; }
    .doc.first { width: 177px; }
    .doc.on { background: #fff; color: #222; font-weight: 700; padding-right: 4px; }
    .docs .end { margin-left: auto; width: 26px; }
    .faded { opacity: .55; }
    .view { flex: 1; display: flex; min-height: 0; position: relative; }
    .canvas { flex: 1; min-width: 0; height: 100%; }
    .view .vbar { width: 19px; margin: 2px 5px 0 3px; }
    .view .above { flex: 319; } .view .below { flex: 320; } .view .knob { height: 21px; }
    .nav { position: absolute; right: 26px; top: 2px; width: 35px; display: flex; flex-direction: column; align-items: center; gap: 6px; padding: 3px; border: 2px solid #bdbdbd; border-radius: 6px; background: #f3f3f3; }
    .nav .dot { align-self: flex-end; width: 8px; height: 8px; border: 1px solid #999; border-radius: 50%; }
    .nav .line { width: 100%; height: 1px; background: #bbb; }
    .nav .two { position: relative; }
    .nav .two span { position: absolute; right: -2px; bottom: -3px; font-size: 10px; line-height: 10px; font-weight: 700; color: #4580ad; }
    .vcb { display: flex; align-items: center; height: 21px; background: #eee; border-bottom: 1px solid #cbcbcb; margin: 0 5px 2px 2px; color: #111; }
    .vcb .scale { width: 92px; padding-left: 27px; justify-content: flex-start; }
    .vcb .ic { width: 25px; height: 20px; justify-content: flex-start; }
    .hbar { flex: 1; display: flex; align-items: center; height: 20px; }
    .hbar .arrow { width: 20px; display: grid; place-items: center; }
    .vcb .hbar .arrow { width: 16px; }
    .hbar .a { flex: 412; } .hbar .b { flex: 409; } .hbar .thumb { width: 19px; height: 19px; background: #cbcbcb; }

    .browser { display: flex; flex-direction: column; border-left: 2px solid #cbcbcb; min-height: 0; padding: 0 1px; white-space: nowrap; }
    .browser .phead { padding-left: 2px; }
    .bmain { flex: 1; display: flex; min-height: 0; }
    .tree { flex: 1; background: #fff; padding: 1px 0 0 10px; overflow: hidden; color: #111; }
    .row { display: flex; align-items: center; height: 22px; }
    .g { flex: none; width: 26px; height: 22px; background: repeating-linear-gradient(#999 0 1px, transparent 1px 2px) 0 0 / 1px 100% no-repeat; }
    .g.t, .g.e { width: 22px; display: flex; align-items: center; background:
      repeating-linear-gradient(#999 0 1px, transparent 1px 2px) 0 0 / 1px 100% no-repeat,
      repeating-linear-gradient(90deg, #999 0 1px, transparent 1px 2px) 0 50% / 19px 1px no-repeat; }
    .g.e { background-size: 1px 50%, 19px 1px; }
    .g.short { width: 16px; }
    .exp { width: 13px; height: 13px; margin-left: -6px; background: #f3f3f3; border: 1px solid #8f8f8f; flex: none; }
    .row .ico { margin-right: 6px; }
    .sel { background: #e1e1e1; font-weight: 700; padding: 0 4px 0 3px; margin-left: -3px; line-height: 22px; }
    .browser .p { flex: 450; } .browser .before { flex: 98; } .browser .q { flex: 112; }
    .browser .hbar { flex: none; }
    .browser .hbar .thumb { flex: 272; } .browser .hbar .q { flex: 6; }

    .status { display: flex; align-items: center; height: 32px; background: #cbcbcb; padding: 1px 0 0 2px; color: #222; }
    .status .msg { width: 686px; }
    .status .combo { width: 254px; height: 23px; background: #fff; }
    .status .combo select { color: #8a8a8a; }
    .w1 { margin-right: 9px; } .w2 { width: 44px; margin-left: 8px; gap: 6px; justify-content: flex-start; } .w3 { margin-left: 18px; } .w4 { margin: 0 7px 0 9px; }
    .status .picks { display: flex; gap: 10px; margin-left: auto; padding-right: 76px; align-items: center; }
    .picks .count { gap: 1px; }

    .task { display: flex; height: 50px; background: #2a2b2c; color: #f2f2f2; }
    .start { width: 60px; }
    .search { display: flex; align-items: center; gap: 13px; width: 360px; background: #f2f2f2; color: #333; padding-left: 15px; border: 1px solid #c4c4c4; border-width: 1px 0 1px 1px; overflow: hidden; }
    .search input { flex: 1; min-width: 0; font-size: 18px; outline: 0; }
    .search input::placeholder { color: #444; opacity: 1; }
    .app { width: 62px; position: relative; }
    .app.run { border-bottom: 3px solid transparent; border-image: linear-gradient(90deg, transparent 6px, #76b9ed 6px 56px, transparent 56px) 3; padding-top: 3px; }
    .app.active { background: #555658; border-image: none; border-bottom-color: #76b9ed; }
    .mark { position: absolute; font-weight: 700; color: #fff; line-height: 12px; }
    .mark.mail { right: 5px; bottom: 5px; width: 22px; height: 22px; border: 1px solid #bbb; border-radius: 50%; background: #333; font-size: 13px; line-height: 20px; }
    .mark.chrome2 { font-size: 9px; right: 20px; bottom: 13px; font-weight: 400; }
    .mark.teams { font-size: 11px; left: 20px; top: 18px; }
    .mark.excel { font-size: 15px; left: 20px; top: 20px; }
    .mark.gpdf { font-size: 8px; left: 24px; bottom: 4px; }
    .mark.eapp { font-size: 15px; left: 19px; top: 20px; }
    .weather { margin-left: auto; gap: 8px; font-size: 16px; width: 101px; justify-content: flex-start; position: relative; }
    .weather .n { position: absolute; left: 19px; top: 8px; width: 14px; font-size: 10px; line-height: 14px; border-radius: 50%; background: #c8301e; }
    .tray { width: 30px; }
    .lang { width: 41px; font-size: 16px; }
    .clock { width: 92px; flex-direction: column; line-height: 22px; padding-bottom: 1px; }
    .notes { width: 40px; }
    .desk { width: 22px; padding-left: 16px; }
    .desk i { display: block; width: 1px; height: 50px; background: #6a6a6a; }

    .wm { position: absolute; left: 844px; top: 942px; width: 232px; display: flex; flex-direction: column; align-items: center; color: rgba(170, 174, 178, .42); pointer-events: none; white-space: nowrap; }
    .wm .ar { font-family: "DejaVu Sans", sans-serif; font-weight: 700; font-size: 66px; line-height: 78px; }
    .wm .en { font-family: Inter, sans-serif; font-weight: 600; font-size: 37px; line-height: 44px; }
  `;

  private ic(n: string, s = 20, extra: unknown = nothing) {
    return html`<svg width=${s} height=${s} viewBox="0 0 20 20" aria-hidden="true">${sm[n]}${extra}</svg>`;
  }
  private caret(cls = "") {
    return html`<svg class=${cls} width="7" height="4" viewBox="0 0 7 4" aria-hidden="true"><path d="M0 0h7L3.500 4z" fill="#333" /></svg>`;
  }
  private chev(d: "u" | "d" | "l" | "r") {
    const p = { u: "M3 10l5-5 5 5", d: "M3 6l5 5 5-5", l: "M10 3L5 8l5 5", r: "M6 3l5 5-5 5" }[d];
    return html`<svg width="16" height="16" viewBox="0 0 16 16" aria-hidden="true"><path d=${p} fill="none" stroke="#555" stroke-width="1.8" /></svg>`;
  }
  private close(label: string) {
    return html`<button aria-label=${label}>${this.ic("close", 18)}</button>`;
  }

  private renderTitle() {
    return html`<header class="title">
      ${this.ic("appR", 22)} ${this.ic("panel", 18)}
      <div class="name">Autodesk Revit 2021.1.2 - Task2_Ahmed saad_KT_921574.0001 - Section: Section 5</div>
      <div class="account">
        <svg width="5" height="9" viewBox="0 0 5 9"><path d="M5 0v9L0 4.500z" fill="#333" /></svg>
        ${this.ic("binoc", 22)}${this.ic("user", 22)}<span>ahmedafifi963</span>${this.caret()}
        <button aria-label="Store">${this.ic("cart", 22)}</button><span class="sep"></span>
        <button aria-label="Help">${this.ic("help", 21)}</button>${this.caret()}
      </div>
      <div class="winbtns">
        <button aria-label="Minimise">${this.ic("min")}</button><button aria-label="Restore">${this.ic("restore")}</button><button aria-label="Close">${this.ic("close")}</button>
      </div>
    </header>`;
  }

  private renderTool(t: Tool) {
    return html`<button class=${classMap({ tool: true, off: !!t.off })} ?disabled=${t.off}>
      <svg width="40" height="40" viewBox="0 0 40 40" aria-hidden="true">${big[t.i]}</svg>
      <span class="txt">${t.l.map((x) => html`<span>${x}</span>`)}
        ${t.caret ? this.caret("caret-" + t.caret) : nothing}</span>
    </button>`;
  }

  private renderRibbon() {
    return html`<nav class="tabs">
        <button class="file">File</button>
        ${TABS.map((t, i) => html`<button class=${i ? "" : "on"}>${t}</button>`)}
        <button aria-label="Ribbon display"><svg width="32" height="12" viewBox="0 0 32 12"><rect x="1" y="1" width="18" height="10" rx="3" fill="#eee" stroke="#444" stroke-width="1.500" /><path d="M6.500 8h7L10 4zM25 4h7l-3.500 4z" fill="#222" /></svg></button>
      </nav>
      <section class="ribbon">
        <div class="panel select">
          <div class="body"><button class="tool modify"><svg width="40" height="40" viewBox="0 0 40 40">${big.modify}</svg>Modify</button></div>
          <div class="ptitle">Select <svg width="9" height="6" viewBox="0 0 9 6"><path d="M0 0h9L4.500 6z" fill="#222" /></svg></div>
        </div>
        ${PANELS.map((p) => html`<div class="panel ${p.id}">
          <div class="body">
            ${p.tools ? html`<div class="tools">${p.tools.map((t) => this.renderTool(t))}</div>` : nothing}
            ${p.stack ? html`<div class="stack">${p.stack.map((m) => html`<button class=${classMap({ mini: true, off: !!m.off })} ?disabled=${m.off}>${this.ic(m.i)}${m.l}${m.caret ? this.caret() : nothing}</button>`)}</div>` : nothing}
          </div>
          <div class="ptitle">${p.title}${p.caret ? html`<svg width="9" height="6" viewBox="0 0 9 6"><path d="M0 0h9L4.500 6z" fill="#222" /></svg>` : nothing}</div>
        </div>`)}
      </section>
      <div class="qat">
        ${QAT.map((q) => q === "|" ? html`<span class="sep"></span>`
          : q === "^" ? html`<button class="menu" aria-label="More">${this.caret()}</button>`
          : html`<button class=${q === "thin" ? "active" : ""} aria-label=${q}>${this.ic(q)}</button>`)}
      </div>
      <div class="options"></div>`;
  }

  private renderProp(p: Prop, i: number) {
    if (p.kind === "head")
      return html`<tr><th class="head" colspan="3"><div class="headrow">${p.n}<svg width="9" height="9" viewBox="0 0 9 9"><path d="M1 4l3.500-3L8 4M1 8l3.500-3L8 8" fill="none" stroke="#222" stroke-width="1.400" /></svg></div></th></tr>`;
    const id = "prop" + i;
    const chk = p.kind === "check" || p.kind === "on";
    return html`<tr class=${p.kind === "dim" ? "dim" : ""}>
      <th class="lab" scope="row">${chk || p.kind === "btn" ? html`<label for=${id}>${p.n}</label>` : p.n}</th>
      ${p.kind === "btn" ? html`<td class="btncell"><button class="cell" id=${id}>${p.v}</button></td>`
        : chk ? html`<td class="val"><input class="check" type="checkbox" id=${id} ?checked=${p.kind === "on"} /></td>`
        : html`<td class="val ${p.kind ?? ""}">${p.v}</td>`}
      <td></td></tr>`;
  }

  private renderProps() {
    return html`<aside class="props">
      <div class="phead">Properties ${this.close("Close properties")}</div>
      <div class="type"><div class="tile"><svg width="36" height="42" viewBox="0 0 36 42"><path d="M14 2v12M14 2l19 16-19 14z" fill="${D}" stroke="${D}" stroke-width="2" /><path d="M14 30v11" stroke="#777" stroke-width="3" /><circle cx="12.500" cy="18" r="11" fill="url(#lite)" stroke="#777a80" stroke-width="2.400" /></svg></div>
        <div class="desc">Section<br />Building Section</div><svg width="9" height="5" viewBox="0 0 9 5"><path d="M0 0h9L4.500 5z" fill="#333" /></svg></div>
      <div class="filter"><div class="combo"><select aria-label="Element filter"><option>Section: Section 5</option></select>${this.chev("d")}</div>
        <button class="edit">${this.ic("editType", 16)}Edit Type</button></div>
      <div class="sheet"><div class="clip"><table><colgroup><col class="c1" /><col class="c2" /><col /></colgroup><tbody>${PROPS.map((p, i) => this.renderProp(p, i))}</tbody></table></div>
        <div class="vbar"><span class="arrow">${this.chev("u")}</span><span class="thumb p"></span><span class="q"></span><span class="arrow">${this.chev("d")}</span></div></div>
      <div class="pfoot"><a href="#help">Properties help</a><button disabled>Apply</button></div>
    </aside>`;
  }

  private stairs(x0: number, x1: number, x2: number, x3: number) {
    const floors = [464, 507, 551, 594, 638, 681, 725, 769, 824, 884];
    const out: unknown[] = [];
    for (let i = 0; i < 9; i++) {
      const t = floors[i], b = i === 8 ? 879 : floors[i + 1], tall = i > 6;
      const top = b - (tall ? 25 : 20), st = t + 10, sb = st + (tall ? 17 : 11);
      for (let y = st; y <= sb; y += 3) out.push(svg`<path d="M${x2} ${y + 0.5}H${x3}" stroke="#000" stroke-width=${tall ? 1 : 2}/>`);
      if (tall || i === 6) {
        for (let y = top; y < b; y += 3) out.push(svg`<path d="M${x0} ${y + 0.5}H${x1}" stroke="#000"/>`);
        out.push(svg`<rect x=${x0} y=${i === 6 ? b - 9 : top + 9} width=${x1 - x0} height=${i === 6 ? 9 : 5} fill="#000" stroke="none"/>`);
      } else out.push(svg`<rect x=${x0} y=${top} width=${x1 - x0} height=${b - top} fill="#000" stroke="none"/>`);
      out.push(svg`<path d="M${x1 - 0.5} ${b}V${top - 3}L${x2 + 0.5} ${sb}V${st - 4}M${x1 - 0.5} ${top + 2}L${x2 + 0.5} ${sb + 3}v-3" fill="none" stroke="#000"/>`);
    }
    return out;
  }

  private renderDrawing() {
    const slabs = [464, 507, 551, 594, 638, 681, 725, 769, 824];
    const grids: [string, number, number][] = [["1", 622, 622], ["2", 691, 690], ["3", 760, 759], ["4", 828, 828], ["5", 897, 897], ["6", 966, 965],
      ["7", 1035, 1034], ["8", 1041, 1040], ["9", 1109, 1109], ["10", 1178, 1177], ["11", 1247, 1246], ["12", 1315, 1315]];
    const cols: [number, number, number][] = [[612, 619, 464], [619, 626, 467], [687, 694, 467], [756, 763, 426], [793, 796, 426], [824, 832, 426], [893, 900, 467],
      [962, 969, 467], [1032, 1037, 467], [1037, 1042, 467], [1105, 1112, 426], [1140, 1144, 426], [1174, 1181, 426], [1243, 1249, 467], [1276, 1283, 467], [1311, 1318, 464]];
    const foot: number[][] = [[603, 637, 600, 641], [671, 710, 666, 715], [740, 779, 735, 784], [808, 848, 804, 852], [877, 916, 873, 921], [946, 985, 941, 989],
      [1018, 1057, 1013, 1060], [1087, 1128, 1082, 1133], [1158, 1197, 1153, 1201], [1227, 1265, 1222, 1270], [1301, 1328, 1295, 1332]];
    const r = rnd(97);
    let dots = "";
    for (const s of slabs) for (let k = 0; k < 46; k++) dots += `M${Math.round(622 + r() * 692)} ${Math.round(s + 5 + r() * 2)}.5h1`;
    for (const c of cols) for (let k = 0; k < 30; k++) dots += `M${Math.round(c[0] + 1 + r() * (c[1] - c[0] - 2))} ${Math.round(472 + r() * 410)}.5h1`;
    for (let k = 0; k < 60; k++) dots += `M${Math.round(606 + r() * 710)} ${Math.round(887 + r() * 6)}.5h1`;
    return svg`
      <g fill="none" stroke="#000" stroke-width="1" shape-rendering="crispEdges">
        ${slabs.map((s, i) => svg`<path d="M614 ${s + (i > 6 ? 9 : 8)}.5H1318"/>`)}
        <path d="M756 434.500H832M1105 434.500H1181"/>
        ${cols.map(([a, b, t]) => svg`<rect x=${a + 0.5} y=${t + 0.5} width=${b - a} height=${884 - t} fill="#fff"/>`)}
        <path d="M624.500 467V884M832.500 426V884M761.500 426V884M1109.500 430V884M1177.500 430V884M1313.500 467V884"/>
        <path d="M761 430V884M829 430V884M1106 430V884M1180.500 430V884M1316 470V884" stroke-width="2" stroke-dasharray="14 9 6 8"/>
        <path d="M756 426.500H833M756 428.500H833M1105 426.500H1182M1105 428.500H1182"/>
        ${slabs.map((s) => svg`<rect x="612.500" y=${s + 0.5} width=${s === 824 ? 709 : 706} height="3" fill="#fff"/><path d="M756 ${s}v4M759 ${s}v4M793 ${s}v4M796 ${s}v4M824 ${s}v4M828 ${s}v4M832 ${s}v4M1105 ${s}v4M1109 ${s}v4M1140 ${s}v4M1144 ${s}v4M1174 ${s}v4M1181 ${s}v4M614.500 ${s + 3}v5"/>`)}
        ${slabs.slice(0, 8).map((s) => svg`<path d="M1145 ${s + 4}H1318" stroke-width="2"/>`)}
        ${slabs.slice(0, 7).map((s) => svg`<path d="M1283 ${s + 2}h3M1316 ${s + 2}h3" stroke-width="4"/>`)}
        <path d=${dots} stroke="#777"/>
        ${this.stairs(797, 810, 815, 824)}${this.stairs(1113, 1123, 1128, 1141)}
        <path d="M994.500 770v4h23v-4M1002 771.500h10M845.500 825v4h22v-4M851 827.500h6M994.500 825v4h23v-4M1002 827.500h10M665.500 773v5M669.500 773v5M723.500 773v5M725.500 773v5M863.500 828v4M866.500 828v4M1069.500 828v4M1072.500 828v4"/>
        <path d="M584.500 824.500h32v5h-32z" fill="#fff"/><path d="M590 834l22-10M590 831l22-9M592 835l12-6" stroke-width="1.500"/><path d="M589 831v4h5"/>
        <path d="M503.500 808v41M502.500 808v38M502.500 849.500v-3h5v1h8v2z"/>
        <path d="M607 886H1330" stroke-width="2"/>
        ${foot.map(([a, b, c, d]) => svg`<rect x=${c + 0.5} y="891.500" width=${d - c} height="4" fill="#fff"/><rect x=${a + 0.5} y="884.500" width=${b - a} height="7" fill="#fff"/><path d="M${a + 6}.5 891v4M${b - 5}.5 891v4M${a + 14}.5 884v7M${a + 17}.5 884v11M${b - 14}.5 884v7M${a + 8} 886.500h7M${b - 14} 886.500h8"/>`)}
        <path d="M600 895.500H1398M640 891.500h10M652 891.500h6M718 891.500h9M790 891.500h8M856 891.500h12M924 891.500h8M992 891.500h12M1064 891.500h8M1206 891.500h10M1274 891.500h14"/>
        <path d="M756.500 895v4M759.500 895v4M793.500 895v4M796.500 895v4M824.500 895v4M828.500 895v4M1105.500 895v4M1109.500 895v4M1140.500 895v4M1144.500 895v4M1174.500 895v4M1178.500 895v4"/>
        <path d="M746.500 899.500h95v9h-95zM741.500 908.500h105v5h-105zM1095.500 899.500h95v9h-95zM1091.500 908.500h104v5h-104z" fill="#fff"/>
        <path d="M1321.500 824v11M1318 835.500h65v50M1379.500 836v50M1318 864.500h65M1318 866.500h65M1318 881.500h61M1328 885.500h52"/>
        <path d="M1358.500 885.500h37v5h-37zM1332 891.500h66v4M1355.500 891v4"/>
        <path d="M1344 853.500h60" stroke-width="2" stroke-dasharray="8 8"/><path d="M1384 853.500H1518" stroke-width="1.500"/>
        <path d="M1397.500 842.500h65v10.500h-65zM1406.500 842v11M1426.500 842v-7h8v7M1426.500 853v-9h5v9M1454.500 853v-9h12M1466.500 842.500h29v10.500h-29zM1477.500 842v-7h7v7M1496 844.500h22" fill="none"/>
      </g>
      <rect x="387.500" y="412.500" width="1131" height="501" fill="none" stroke="#7c97dd" stroke-width="3"/>
      <rect x="387.500" y="412.500" width="1131" height="501" fill="none" stroke="#0a0a55" stroke-width="1.500"/>
      <g stroke="#000" fill="none" shape-rendering="crispEdges">
        ${grids.map(([, , x]) => svg`<path d="M${x}.5 398V418M${x}.5 425V433"/><path d="M${x}.5 441V884" stroke-dasharray="28 8 7 8"/><path d="M${x}.5 898V917"/>`)}
      </g>
      <g stroke="#000" fill="none">${grids.map(([, c]) => svg`<circle cx=${c + 0.5} cy="383.500" r="15"/>`)}</g>
      <g font-family="Liberation Sans, Arial, sans-serif" font-size="15" fill="#000" text-anchor="middle">
        ${grids.map(([n, c]) => svg`<text x=${n === "7" ? c - 2 : c} y="388">${n}</text>`)}
      </g>`;
  }

  private renderCenter() {
    const docs: [string, string][] = [["sheet", "S.4 - SCHEDULES"], ["house", "{3D}"], ["plan", "1ST Floor"], ["section", "Section 3"], ["section", "Section 4"]];
    return html`<main class="center">
      <div class="docs">
        ${docs.map(([i, t], k) => html`<button class="doc ${k ? "" : "first"}"><span class="faded">${this.ic(i, i === "section" ? 18 : 20)}</span>${t}</button>`)}
        <button class="doc on">${this.ic("section", 18)}Section 5<span class="spacer"></span>${this.ic("close", 18)}</button>
        <button class="end" aria-label="Tab list">${this.ic("custom", 22)}</button>
      </div>
      <div class="view">
        <svg class="canvas" viewBox="307 273 1244 702" preserveAspectRatio="xMidYMid meet" role="img" aria-label="Building section">${this.renderDrawing()}</svg>
        <div class="vbar"><span class="arrow">${this.chev("u")}</span><span class="above"></span><span class="thumb knob"></span><span class="below"></span><span class="arrow">${this.chev("d")}</span></div>
        <div class="nav"><span class="dot"></span><button class="two" aria-label="Steering wheel">${this.ic("wheel", 25)}<span>2D</span></button>${this.caret("faded")}<span class="line"></span><button aria-label="Zoom region">${this.ic("zoomR", 20)}</button>${this.caret("faded")}<span class="dot"></span></div>
      </div>
      <div class="vcb"><button class="scale">1 : 200</button>
        ${["vSquare", "vBox", "vSun", "vShadow", "vCrop", "vCropBulb", "vGlasses", "vBulb", "vTemp", "vModel", "vLock"].map((i) => html`<button class="ic" aria-label=${i}>${this.ic(i, 20)}</button>`)}
        <div class="hbar"><span class="arrow">${this.chev("l")}</span><span class="a"></span><span class="thumb"></span><span class="b"></span><span class="arrow">${this.chev("r")}</span></div>
        <svg width="22" height="18" viewBox="0 0 22 18"><path d="M5 13h4v4H5zM10 13h4v4h-4zM15 13h4v4h-4zM10 8h4v4h-4zM15 8h4v4h-4zM15 3h4v4h-4z" fill="#c3c3c3" /></svg></div>
    </main>`;
  }

  private renderNode(n: Node) {
    const box = n.box ? html`<button class="exp" aria-label="Toggle ${n.t}"><svg width="11" height="11" viewBox="0 0 11 11"><path d=${n.box === "+" ? "M1 5.500h9M5.500 1v9" : "M1 5.500h9"} stroke="#3b54a5" /></svg></button>` : nothing;
    const last = n.g.length - 1;
    return html`<div class="row">
      ${[...n.g].map((c, i) => html`<span class="g ${c} ${n.icon ? "short" : ""}">${i === last ? box : nothing}</span>`)}
      ${n.icon ? html`<span class="ico">${this.ic(n.icon)}</span>` : nothing}<span class=${n.sel ? "sel" : ""}>${n.t}</span></div>`;
  }

  private renderBrowser() {
    return html`<aside class="browser">
      <div class="phead"><span>Project Browser - Task2_Ahmed saad_KT_921...</span>${this.close("Close browser")}</div>
      <div class="bmain"><div class="tree">${TREE.map((n) => this.renderNode(n))}</div>
        <div class="vbar"><span class="arrow">${this.chev("u")}</span><span class="before"></span><span class="thumb p"></span><span class="q"></span><span class="arrow">${this.chev("d")}</span></div></div>
      <div class="hbar"><span class="arrow">${this.chev("l")}</span><span class="thumb"></span><span class="q"></span><span class="arrow">${this.chev("r")}</span><span class="arrow"></span></div>
    </aside>`;
  }

  private renderStatus() {
    return html`<footer class="status"><span class="msg">Views : Section : Section 5</span>
      <button class="w1" aria-label="Worksets">${this.ic("sWork")}</button>
      <div class="combo"><select aria-label="Active workset"><option></option></select><span class="faded">${this.chev("d")}</span></div>
      <button class="w2" aria-label="Requests">${this.ic("sReq")}:0</button>
      <button class="w3" aria-label="Design options">${this.ic("sOpt")}</button><button class="w4" aria-label="Add to set">${this.ic("sAdd")}</button>
      <div class="combo"><select aria-label="Active option"><option>Main Model</option></select><span class="faded">${this.chev("d")}</span></div>
      <div class="picks">${["pLink", "pUnder", "pPin", "pFace", "pDrag"].map((i) => html`<button aria-label=${i}>${this.ic(i, 20, cursorOverlay)}</button>`)}
        <button aria-label="Background processes">${this.ic("gear", 18)}</button><button class="count">${this.ic("funnel")}:0</button></div>
    </footer>`;
  }

  private renderTask() {
    const marks: Record<string, string> = { mail: "20", chrome2: "A", teams: "T", excel: "X", gpdf: "PDF", eapp: "E" };
    return html`<footer class="task">
      <button class="start" aria-label="Start"><svg width="20" height="20" viewBox="0 0 20 20"><path d="M0 3l9-1v8H0zM10 1.800L20 0v10H10zM0 11h9v8l-9-1zM10 11h10v9l-10-1.500z" fill="#fff" /></svg></button>
      <div class="search"><svg width="22" height="22" viewBox="0 0 22 22"><circle cx="13" cy="8" r="7" fill="none" stroke="#222" stroke-width="1.600" /><path d="M8 13l-7 8" stroke="#222" stroke-width="1.600" /></svg>
        <input type="text" placeholder="Type here to search" aria-label="Search" />
        <svg width="100" height="48" viewBox="0 0 100 48"><path d="M0 48C8 34 30 30 60 31c18 0 32 3 40 7v10z" fill="#7ccbf6" /><path d="M10 47c10-11 26-13 46-12 10 2 20 7 26 12z" fill="#3ba5ee" /><path d="M32 30l-2 8M40 32v8M48 32v6" stroke="#7d5230" stroke-width="2" /><path d="M30 30h32l38 15v5L58 36H30z" fill="#e8c07a" stroke="#9a6a35" /><path d="M34 22h27v9H34z" fill="#d98b45" /><path d="M37 24h4v6h-4zM45 24h4v6h-4zM54 24h4v6h-4z" fill="#29415e" /><path d="M30 23l8-8h18l9 8z" fill="#d5382f" /><path d="M37 16l10-6 10 6z" fill="#e0524a" /><path d="M47 11l-4 12M47 11l5 12" stroke="#f2938c" /><path d="M47 8v4M66 18v16M58 30l42 18" stroke="#9a6a35" stroke-width="1.600" /></svg></div>
      <button class="app" aria-label="Task view"><svg width="30" height="30" viewBox="0 0 30 30">${task.view}</svg></button>
      ${APPS.map((a) => html`<button class=${classMap({ app: true, run: !!a.run, active: !!a.active })} aria-label=${a.n}>
        <svg width="30" height="30" viewBox="0 0 30 30">${task[a.i]}</svg>${marks[a.i] ? html`<span class="mark ${a.i}">${marks[a.i]}</span>` : nothing}</button>`)}
      <button class="weather"><svg width="28" height="28" viewBox="0 0 28 28"><circle cx="14" cy="15" r="12" fill="#ee9320" /><circle cx="12" cy="12" r="8" fill="#f5aa3c" /></svg><span class="n">1</span>37°C</button>
      ${["up", "cloud", "battery", "wifi", "cam", "vol"].map((t) => html`<button class="tray" aria-label=${t}><svg width="20" height="20" viewBox="0 0 20 20">${tray[t]}</svg></button>`)}
      <button class="lang">ع</button>
      <button class="clock"><span>9:07 PM</span><span>8/18/2024</span></button>
      <button class="notes" aria-label="Notifications"><svg width="20" height="20" viewBox="0 0 20 20">${tray.note}</svg></button>
      <div class="desk"><i></i></div>
    </footer>`;
  }

  render() {
    return html`<div class="win">
      <svg class="defs"><defs>
        <linearGradient id="lite" x1="0" y1="0" x2="1" y2="1"><stop offset="0" stop-color="#fdfdfd" /><stop offset="1" stop-color="#ccd0d5" /></linearGradient>
        <linearGradient id="side"><stop offset="0" stop-color="#fff" /><stop offset="1" stop-color="#c2c6cb" /></linearGradient>
      </defs></svg>
      ${this.renderTitle()}<div class="progress"></div>${this.renderRibbon()}
      <div class="main">${this.renderProps()}${this.renderCenter()}${this.renderBrowser()}</div>
      ${this.renderStatus()}${this.renderTask()}
      <div class="wm"><span class="ar" lang="ar">مستقل</span><span class="en">mostaql.com</span></div>
    </div>`;
  }
}
